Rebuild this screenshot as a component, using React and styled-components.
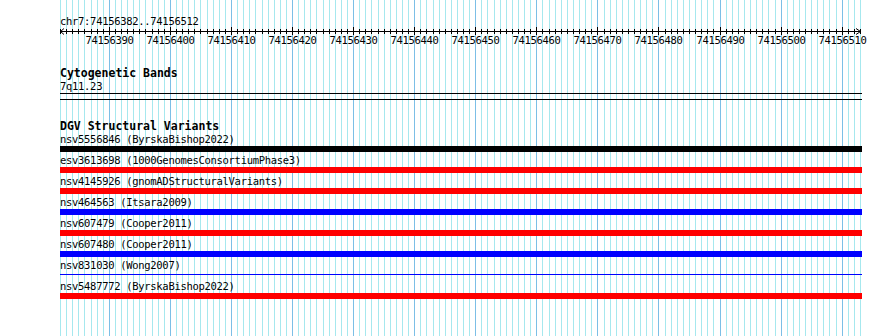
import styled, { createGlobalStyle } from "styled-components";

const START = 74156382;
const END = 74156512;
const LEFT = 60;
const VIEW_W = 800;
const BASES = END - START + 1;
const BP = VIEW_W / BASES;

const GlobalStyle = createGlobalStyle`
  html, body {
    margin: 0;
    padding: 0;
    background: #fff;
  }
  body {
    font-family: "DejaVu Sans Mono", "Liberation Mono", monospace;
    color: #000;
  }
`;

const Page = styled.div`
  position: relative;
  width: 890px;
  height: 336px;
  overflow: hidden;
  background: #fff;
`;

const GridLayer = styled.svg`
  position: absolute;
  left: 0;
  top: 0;
  z-index: 0;
`;

const Content = styled.div`
  position: relative;
  z-index: 1;
  padding: 16px 0 0 ${LEFT}px;
  display: flex;
  flex-direction: column;
`;

const Location = styled.div`
  font-size: 10.5px;
  letter-spacing: -0.3px;
  line-height: 11px;
  white-space: pre;
`;

const Ruler = styled.svg`
  display: block;
  overflow: visible;
`;

const Heading = styled.div`
  font-size: 11.5px;
  font-weight: bold;
  line-height: 13px;
  margin-top: ${(p) => p.$gap}px;
  white-space: pre;
`;

const Label = styled.div`
  font-size: 10.5px;
  letter-spacing: -0.3px;
  line-height: 13px;
  white-space: pre;
`;

const Divider = styled.div`
  width: 802px;
  height: 5px;
  border-top: 1px solid #000;
  border-bottom: 1px solid #000;
`;

const Track = styled.div`
  display: flex;
  flex-direction: column;
  width: 802px;
`;

const Feature = styled.div`
  display: flex;
  flex-direction: column;
  height: 21px;
`;

const Bar = styled.div`
  height: 6px;
  width: 802px;
  background: ${(p) => (p.$thin ? "transparent" : p.$color)};
  display: flex;
  align-items: center;
  &::after {
    content: "";
    display: ${(p) => (p.$thin ? "block" : "none")};
    width: 100%;
    height: 1px;
    margin-top: -1px;
    background: ${(p) => p.$color};
  }
`;

const features = [
  { name: "nsv5556846 (ByrskaBishop2022)", color: "#000000" },
  { name: "esv3613698 (1000GenomesConsortiumPhase3)", color: "#ff0000" },
  { name: "nsv4145926 (gnomADStructuralVariants)", color: "#ff0000" },
  { name: "nsv464563 (Itsara2009)", color: "#0000ff" },
  { name: "nsv607479 (Cooper2011)", color: "#ff0000" },
  { name: "nsv607480 (Cooper2011)", color: "#0000ff" },
  { name: "nsv831030 (Wong2007)", color: "#0000ff", thin: true },
  { name: "nsv5487772 (ByrskaBishop2022)", color: "#ff0000" },
];

const xAt = (i) => Math.round(LEFT + i * BP);

function Grid() {
  const lines = [];
  for (let i = 0; i <= BASES; i++) {
    const major = (START + i) % 10 === 0;
    lines.push(
      <line
        key={i}
        x1={xAt(i) + 0.5}
        x2={xAt(i) + 0.5}
        y1={0}
        y2={336}
        stroke={major ? "#7cbfe6" : "#a6e8ee"}
        strokeWidth={1}
      />
    );
  }
  return (
    <GridLayer width="890" height="336">
      {lines}
    </GridLayer>
  );
}

function Scale() {
  const ticks = [];
  const labels = [];
  for (let i = 0; i <= BASES; i++) {
    const pos = START + i;
    const x = xAt(i) - LEFT + 0.5;
    const major = pos % 10 === 0;
    ticks.push(
      <line
        key={i}
        x1={x}
        x2={x}
        y1={major ? 0 : 2}
        y2={major ? 8 : 7}
        stroke="#000"
      />
    );
    if (major && i > 0 && i < BASES) {
      labels.push(
        <text
          key={"l" + i}
          x={x}
          y={17}
          textAnchor="middle"
          fontSize="10.5"
          letterSpacing="-0.3"
          fontFamily="'DejaVu Sans Mono', monospace"
          fill="#000"
        >
          {pos}
        </text>
      );
    }
  }
  return (
    <Ruler width="830" height="19">
      <line x1={0} x2={800} y1={4.5} y2={4.5} stroke="#000" />
      <polyline points="4,1.5 0.5,4.5 4,7.5" fill="none" stroke="#000" />
      <polyline points="796,1.5 800.5,4.5 796,7.5" fill="none" stroke="#000" />
      {ticks}
      {labels}
    </Ruler>
  );
}

export default function App() {
  return (
    <Page>
      <GlobalStyle />
      <Grid />
      <Content>
        <Location>chr7:74156382..74156512</Location>
        <Scale />
        <Heading $gap={21}>Cytogenetic Bands</Heading>
        <Label>7q11.23</Label>
        <Divider />
        <Heading $gap={20}>DGV Structural Variants</Heading>
        <Track>
          {features.map((f) => (
            <Feature key={f.name}>
              <Label>{f.name}</Label>
              <Bar $color={f.color} $thin={f.thin} />
            </Feature>
          ))}
        </Track>
      </Content>
    </Page>
  );
}
